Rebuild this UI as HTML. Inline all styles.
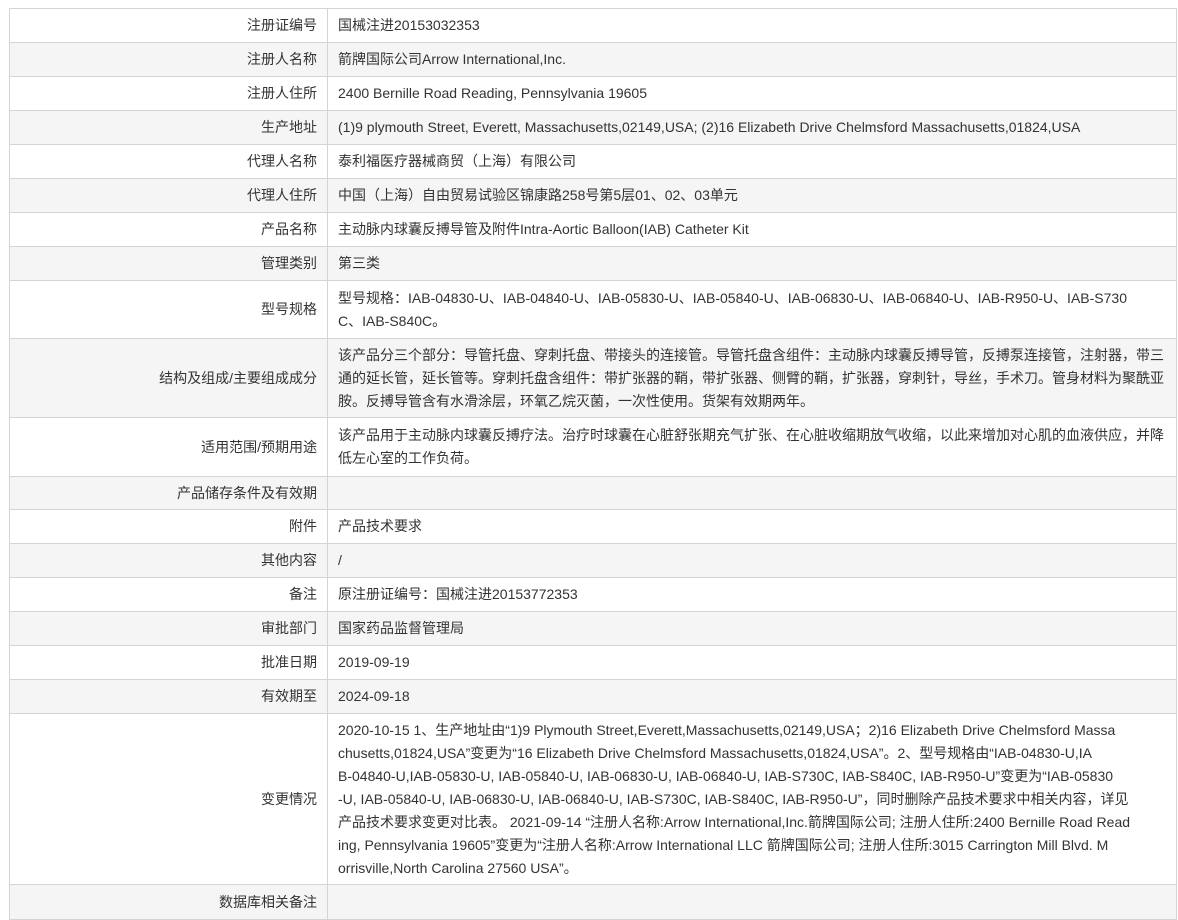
<!DOCTYPE html>
<html><head><meta charset="utf-8"><style>
html,body{margin:0;padding:0;background:#fff;}
body{width:1178px;height:919px;overflow:hidden;font-family:"Liberation Sans","Noto Sans CJK SC",sans-serif;font-size:14px;color:#333;}
table{position:absolute;left:9px;top:8px;width:1168px;border-collapse:collapse;table-layout:fixed;}
td{border:1px solid #d4d4d4;padding:0 10px;line-height:23px;vertical-align:middle;white-space:nowrap;overflow:hidden;}
td.l{width:297px;text-align:right;}
tr:nth-child(even) td{background:#f5f5f5;}
</style></head><body>
<table>
<tr style="height:34px"><td class="l">注册证编号</td><td>国械注进20153032353</td></tr>
<tr style="height:34px"><td class="l">注册人名称</td><td>箭牌国际公司Arrow International,Inc.</td></tr>
<tr style="height:34px"><td class="l">注册人住所</td><td>2400 Bernille Road Reading, Pennsylvania 19605</td></tr>
<tr style="height:34px"><td class="l">生产地址</td><td>(1)9 plymouth Street, Everett, Massachusetts,02149,USA; (2)16 Elizabeth Drive Chelmsford Massachusetts,01824,USA</td></tr>
<tr style="height:34px"><td class="l">代理人名称</td><td>泰利福医疗器械商贸（上海）有限公司</td></tr>
<tr style="height:34px"><td class="l">代理人住所</td><td>中国（上海）自由贸易试验区锦康路258号第5层01、02、03单元</td></tr>
<tr style="height:34px"><td class="l">产品名称</td><td>主动脉内球囊反搏导管及附件Intra-Aortic Balloon(IAB) Catheter Kit</td></tr>
<tr style="height:34px"><td class="l">管理类别</td><td>第三类</td></tr>
<tr style="height:58px"><td class="l">型号规格</td><td>型号规格：IAB-04830-U、IAB-04840-U、IAB-05830-U、IAB-05840-U、IAB-06830-U、IAB-06840-U、IAB-R950-U、IAB-S730<br>C、IAB-S840C。</td></tr>
<tr style="height:79px"><td class="l">结构及组成/主要组成成分</td><td>该产品分三个部分：导管托盘、穿刺托盘、带接头的连接管。导管托盘含组件：主动脉内球囊反搏导管，反搏泵连接管，注射器，带三<br>通的延长管，延长管等。穿刺托盘含组件：带扩张器的鞘，带扩张器、侧臂的鞘，扩张器，穿刺针，导丝，手术刀。管身材料为聚酰亚<br>胺。反搏导管含有水滑涂层，环氧乙烷灭菌，一次性使用。货架有效期两年。</td></tr>
<tr style="height:59px"><td class="l">适用范围/预期用途</td><td>该产品用于主动脉内球囊反搏疗法。治疗时球囊在心脏舒张期充气扩张、在心脏收缩期放气收缩，以此来增加对心肌的血液供应，并降<br>低左心室的工作负荷。</td></tr>
<tr style="height:33px"><td class="l">产品储存条件及有效期</td><td></td></tr>
<tr style="height:34px"><td class="l">附件</td><td>产品技术要求</td></tr>
<tr style="height:34px"><td class="l">其他内容</td><td>/</td></tr>
<tr style="height:34px"><td class="l">备注</td><td>原注册证编号：国械注进20153772353</td></tr>
<tr style="height:34px"><td class="l">审批部门</td><td>国家药品监督管理局</td></tr>
<tr style="height:34px"><td class="l">批准日期</td><td>2019-09-19</td></tr>
<tr style="height:34px"><td class="l">有效期至</td><td>2024-09-18</td></tr>
<tr style="height:171px"><td class="l">变更情况</td><td>2020-10-15 1、生产地址由“1)9 Plymouth Street,Everett,Massachusetts,02149,USA；2)16 Elizabeth Drive Chelmsford Massa<br>chusetts,01824,USA”变更为“16 Elizabeth Drive Chelmsford Massachusetts,01824,USA”。2、型号规格由“IAB-04830-U,IA<br>B-04840-U,IAB-05830-U, IAB-05840-U, IAB-06830-U, IAB-06840-U, IAB-S730C, IAB-S840C, IAB-R950-U”变更为“IAB-05830<br>-U, IAB-05840-U, IAB-06830-U, IAB-06840-U, IAB-S730C, IAB-S840C, IAB-R950-U”，同时删除产品技术要求中相关内容，详见<br>产品技术要求变更对比表。 2021-09-14 “注册人名称:Arrow International,Inc.箭牌国际公司; 注册人住所:2400 Bernille Road Read<br>ing, Pennsylvania 19605”变更为“注册人名称:Arrow International LLC 箭牌国际公司; 注册人住所:3015 Carrington Mill Blvd. M<br>orrisville,North Carolina 27560 USA”。</td></tr>
<tr style="height:35px"><td class="l">数据库相关备注</td><td></td></tr>
</table>
</body></html>
